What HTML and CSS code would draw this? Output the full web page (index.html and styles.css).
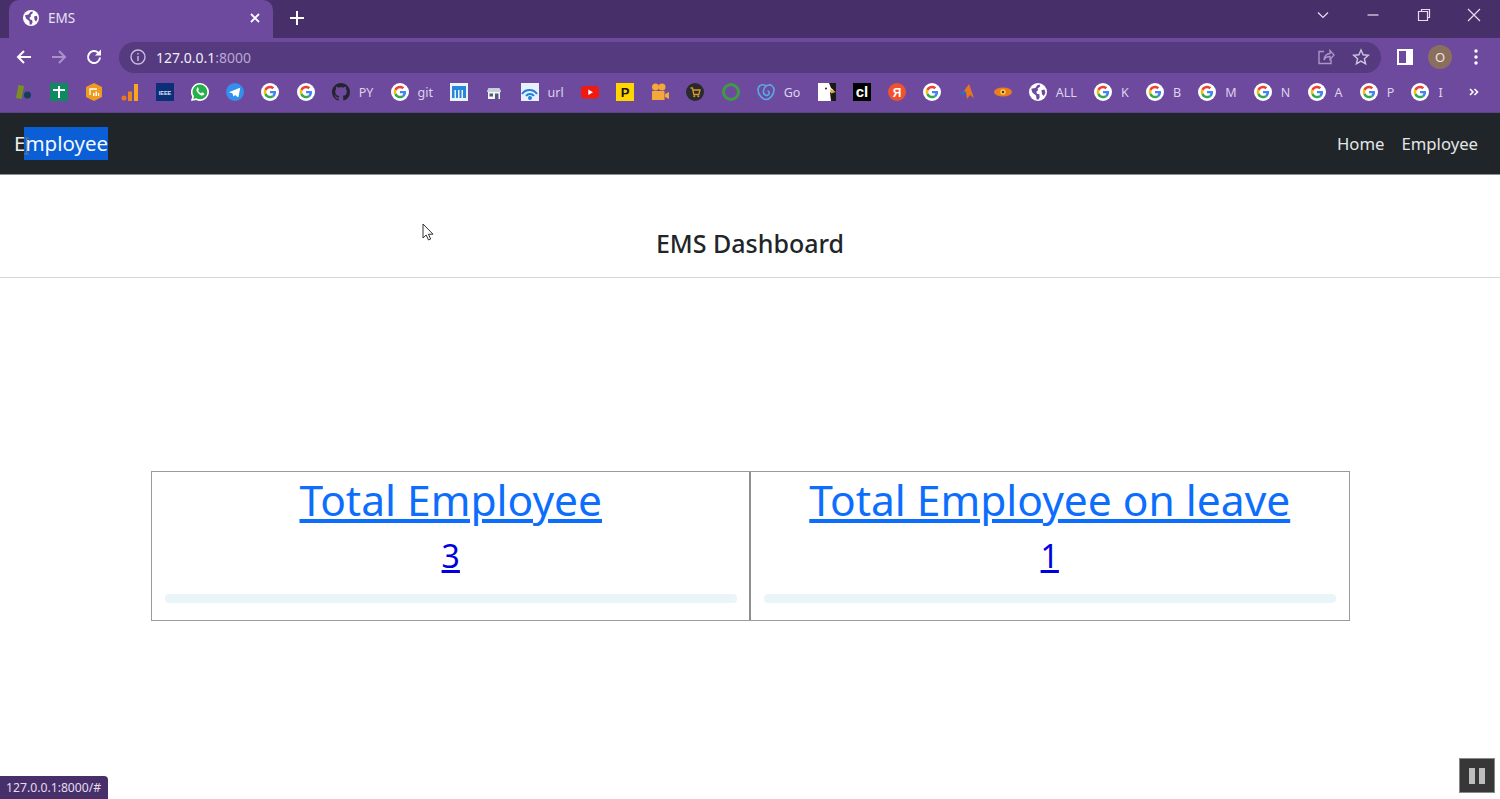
FILE: index.html
```html
<!DOCTYPE html>
<html lang="en">
<head>
<meta charset="utf-8">
<title>EMS</title>
<link rel="stylesheet" href="styles.css">
</head>
<body>
<svg class="defs" width="0" height="0" aria-hidden="true">
  <symbol id="g" viewBox="0 0 18 18">
    <circle cx="9" cy="9" r="9" fill="#fff"/>
    <g transform="translate(2.7 2.7) scale(.2625)">
      <path fill="#EA4335" d="M24 9.5c3.54 0 6.71 1.22 9.21 3.6l6.85-6.85C35.9 2.38 30.47 0 24 0 14.62 0 6.51 5.38 2.56 13.22l7.98 6.19C12.43 13.72 17.74 9.5 24 9.5z"/>
      <path fill="#4285F4" d="M46.98 24.55c0-1.57-.15-3.09-.38-4.55H24v9.02h12.94c-.58 2.96-2.26 5.48-4.78 7.18l7.73 6c4.51-4.18 7.09-10.36 7.09-17.65z"/>
      <path fill="#FBBC05" d="M10.53 28.59c-.48-1.45-.76-2.99-.76-4.59s.27-3.14.76-4.59l-7.98-6.19C.92 16.46 0 20.12 0 24c0 3.88.92 7.54 2.56 10.78l7.97-6.19z"/>
      <path fill="#34A853" d="M24 48c6.48 0 11.93-2.13 15.89-5.81l-7.73-6c-2.15 1.45-4.92 2.3-8.16 2.3-6.26 0-11.57-4.22-13.47-9.91l-7.98 6.19C6.51 42.62 14.62 48 24 48z"/>
    </g>
  </symbol>
  <symbol id="globe" viewBox="0 0 16 16">
    <circle cx="8" cy="8" r="8" fill="#fff"/>
    <path fill="#6e4a9f" d="M2 5.2 5.6 4.4 7.4 2l2-.6.5 1.7-2.3 1.8.5 1.4-1.6 1.4.5 1.8 2.2.6.3 2.7-1.3 2-1.5-.4-.4-3.3L3 8.4zM11 6.4l2.8-.6.8 2.8-1.4 3-1.5-1.4z"/>
  </symbol>
</svg>

<header class="browser">
  <div class="tabstrip">
    <div class="tab">
      <svg class="tab-icon" viewBox="0 0 16 16"><use href="#globe"/></svg>
      <span class="tab-title">EMS</span>
      <svg class="tab-close" viewBox="0 0 10 10"><path d="M1 1l8 8M9 1l-8 8"/></svg>
    </div>
    <svg class="new-tab" viewBox="0 0 14 14"><path d="M7 0v14M0 7h14"/></svg>
    <div class="win-controls">
      <svg class="win" viewBox="0 0 14 14"><path d="M2 4.500l5 5 5-5"/></svg>
      <svg class="win" viewBox="0 0 14 14"><path d="M1.500 7h11"/></svg>
      <svg class="win" viewBox="0 0 14 14"><path d="M4.500 3.500V1.500h8v8h-2M1.500 3.500h9v9h-9z"/></svg>
      <svg class="win" viewBox="0 0 14 14"><path d="M1 1l12 12M13 1L1 13"/></svg>
    </div>
  </div>

  <div class="toolbar">
    <svg class="tool" viewBox="0 0 18 18"><path d="M16 9H3M9 3 3 9l6 6"/></svg>
    <svg class="tool muted" viewBox="0 0 18 18"><path d="M2 9h13M9 3l6 6-6 6"/></svg>
    <svg class="tool" viewBox="0 0 18 18"><path d="M15 9.500A6 6 0 1 1 13.200 4.700"/><path class="solid" d="M16 1.500v6h-6z"/></svg>
    <div class="omnibox">
      <svg class="info" viewBox="0 0 16 16"><circle cx="8" cy="8" r="7"/><path d="M8 7v5M8 4v1.600"/></svg>
      <span class="url">127.0.0.1<span class="url-port">:8000</span></span>
      <svg class="omni-icon share" viewBox="0 0 18 18"><path d="M7 3.500H2v12h12v-4M7 12c0-4 3-6.500 6-6.500V2.500l4 4.500-4 4.500V8.500c-3 0-5 1-6 3.500z"/></svg>
      <svg class="omni-icon" viewBox="0 0 18 18"><path d="M9 2l2.100 4.800 5.200.5-3.900 3.400 1.200 5.100L9 13.100l-4.600 2.700 1.200-5.100-3.900-3.400 5.200-.5z"/></svg>
    </div>
    <svg class="panel" viewBox="0 0 16 16"><path fill="#fff" d="M0 0h16v16H0z"/><path fill="#6e4a9f" d="M2 2h7v12H2z"/></svg>
    <span class="avatar">O</span>
    <svg class="kebab" viewBox="0 0 4 16"><circle cx="2" cy="2" r="1.700"/><circle cx="2" cy="8" r="1.700"/><circle cx="2" cy="14" r="1.700"/></svg>
  </div>

  <div class="bookmarks">
    <span class="bm"><svg viewBox="0 0 18 18"><path fill="#7c8f1e" d="M1 15 3.500 2 9 3 6.500 16z"/><circle cx="12.500" cy="12" r="3.500" fill="#123f5c"/></svg></span>
    <span class="bm"><svg viewBox="0 0 18 18"><path fill="#0f8a60" d="M0 0h18v18H0z"/><path fill="#fff" d="M8 3h2v3h5v2h-5v7H8V8H3V6h5z"/></svg></span>
    <span class="bm"><svg viewBox="0 0 18 18"><path fill="#f09a1e" d="M9 0l8 4v10l-8 4-8-4V4z"/><path fill="none" stroke="#fff" stroke-width="1.300" d="M5 12V6h7"/><path fill="#fff" d="M8 10h1.500v3H8zm2.500-1.500H12V13h-1.500zM13 10h1.200v3H13z"/></svg></span>
    <span class="bm"><svg viewBox="0 0 18 18"><circle cx="3" cy="15" r="2.500" fill="#e8761e"/><path fill="#e8861e" d="M7 8.500h4V18H7z"/><path fill="#f5a623" d="M13 1h4v17h-4z"/></svg></span>
    <span class="bm"><svg viewBox="0 0 18 18"><path fill="#0c2f78" d="M0 0h18v18H0z"/><text x="9" y="11.500" class="ieee">IEEE</text></svg></span>
    <span class="bm"><svg viewBox="0 0 18 18"><path fill="#fff" d="M9 0a9 9 0 0 1 0 18 9 9 0 0 1-4-1l-5 1 1.200-4.500A9 9 0 0 1 9 0z"/><path fill="#25b04a" d="M9 1.600a7.300 7.300 0 0 1 0 14.700 7.300 7.300 0 0 1-3.800-1.100l-3 .8.800-2.800A7.300 7.300 0 0 1 9 1.600z"/><path fill="#fff" d="M6.500 4.800c-.8.500-1.300 1.600-1 2.800.5 2 2.500 4 4.600 4.800 1.300.4 2.400 0 3-.9.300-.5.300-1 .1-1.200l-1.900-.9c-.3-.1-.5 0-.7.300l-.5.700c-1.300-.5-2.400-1.500-3-2.800l.6-.6c.2-.3.200-.5.100-.8l-.7-1.800c-.2-.4-.4-.5-.6-.4z"/></svg></span>
    <span class="bm"><svg viewBox="0 0 18 18"><circle cx="9" cy="9" r="9" fill="#3390ec"/><path fill="#fff" d="M3.500 9 13.300 5c.5-.2.900.1.800.700l-1.600 7.800c-.1.600-.5.700-1 .4l-2.400-1.800-1.200 1.100c-.3.300-.5.200-.6-.2L6.400 10.200l-2.900-.8c-.400-.1-.400-.3 0-.4z"/></svg></span>
    <span class="bm"><svg><use href="#g"/></svg></span>
    <span class="bm"><svg><use href="#g"/></svg></span>
    <span class="bm"><svg viewBox="0 0 16 16"><path fill="#23252e" d="M8 0C3.580 0 0 3.580 0 8c0 3.540 2.290 6.530 5.470 7.590.4.070.55-.17.55-.38 0-.19-.01-.82-.01-1.490-2.010.37-2.530-.49-2.690-.94-.09-.23-.48-.94-.82-1.130-.28-.15-.68-.52-.01-.53.63-.01 1.080.58 1.230.82.72 1.210 1.870.87 2.330.66.070-.52.28-.87.51-1.070-1.780-.2-3.640-.89-3.640-3.950 0-.87.31-1.590.82-2.150-.08-.2-.36-1.020.08-2.120 0 0 .67-.21 2.200.82.64-.18 1.320-.27 2-.27.68 0 1.360.09 2 .27 1.530-1.040 2.200-.82 2.200-.82.44 1.100.16 1.920.08 2.120.51.56.82 1.270.82 2.150 0 3.070-1.870 3.750-3.650 3.950.29.25.54.73.54 1.480 0 1.070-.01 1.930-.01 2.200 0 .21.15.46.55.38A8.013 8.013 0 0 0 16 8c0-4.420-3.580-8-8-8z"/></svg><span class="bm-label">PY</span></span>
    <span class="bm"><svg><use href="#g"/></svg><span class="bm-label">git</span></span>
    <span class="bm"><svg viewBox="0 0 18 18"><path fill="#eaf4fb" d="M0 0h18v18H0z"/><path fill="#2a86d8" d="M2 3h14v12h-3V7h-1.500v8h-2V7H8v8H6V7H4.500v8H2z"/></svg></span>
    <span class="bm"><svg viewBox="0 0 18 18"><path fill="#c6cfdb" d="M2 8 3.500 5h11L16 8v1H2z"/><path fill="#f2f4f7" d="M3 9h12v7H3z"/><path fill="#4a5c78" d="M10 10.500h3.500V16H10zM4.500 10.500H8v3H4.500z"/></svg></span>
    <span class="bm"><svg viewBox="0 0 18 18"><path fill="#e8f1fb" d="M0 0h18v18H0z"/><path fill="none" stroke="#1f7fe0" stroke-width="2" d="M1 11a9 9 0 0 1 15 0M5 13a5 5 0 0 1 8 0"/><circle cx="9" cy="15" r="2" fill="#1f7fe0"/></svg><span class="bm-label">url</span></span>
    <span class="bm"><svg viewBox="0 0 18 18"><rect y="3" width="18" height="12.500" rx="3.500" fill="#f01a10"/><path fill="#fff" d="M7.300 6.500 12 9.200l-4.700 2.700z"/></svg></span>
    <span class="bm"><svg viewBox="0 0 18 18"><path fill="#ffd500" d="M0 0h18v18H0z"/><text x="9" y="13.500" class="yellow-p">P</text></svg></span>
    <span class="bm"><svg viewBox="0 0 18 18"><circle cx="4.500" cy="4" r="3.500" fill="#f5a83a"/><circle cx="11" cy="4" r="3.500" fill="#f5a83a"/><path fill="#f5a83a" d="M1 8h12.500v9H1zM14 11l4-2v7l-4-2z"/></svg></span>
    <span class="bm"><svg viewBox="0 0 18 18"><circle cx="9" cy="9" r="9" fill="#2a2a2c"/><path fill="none" stroke="#d99a2b" stroke-width="1.300" d="M4.500 5h2l1.300 6.500h5L14 7H7"/><circle cx="8.300" cy="13.300" r="1" fill="#d99a2b"/><circle cx="12.300" cy="13.300" r="1" fill="#d99a2b"/></svg></span>
    <span class="bm"><svg viewBox="0 0 18 18"><circle cx="9" cy="9" r="7.500" fill="none" stroke="#3f9a46" stroke-width="3"/></svg></span>
    <span class="bm"><svg viewBox="0 0 18 18"><path fill="none" stroke="#5aa9e6" stroke-width="1.600" d="M9.500 3.500C7 .5 1 1.500 1 7c0 5 5 9.500 8 9.500 3.500 0 8-4.500 8-9.500 0-3.500-3-5.500-5.500-5-3.500.7-5.500 4.500-5 7.500.4 2.500 3 3.500 4.500 2.500 2-1.300 1.500-4-.5-4"/></svg><span class="bm-label">Go</span></span>
    <span class="bm"><svg viewBox="0 0 18 18"><path fill="#1a1a1a" d="M0 0h18v18H0z"/><path fill="#fff" d="M0 0h11l2 5 3 2.500-4 2 1 8.500H0z"/><path fill="#e8a33a" d="m12 6 6 3-5 1.500z"/><circle cx="8" cy="5.500" r="1" fill="#222"/></svg></span>
    <span class="bm"><svg viewBox="0 0 18 18"><path fill="#000" d="M0 0h18v18H0z"/><text x="9" y="14" class="cl">cl</text></svg></span>
    <span class="bm"><svg viewBox="0 0 18 18"><circle cx="9" cy="9" r="9" fill="#f0522e"/><text x="9" y="13.500" class="ya">Я</text></svg></span>
    <span class="bm"><svg><use href="#g"/></svg></span>
    <span class="bm"><svg viewBox="0 0 18 18"><path fill="#2a6fc0" d="M1 10l5-2 2 2-3 2z"/><path fill="#e8761e" d="M6 8l5-7 5 14-4-3-3 4-1-7z"/></svg></span>
    <span class="bm"><svg viewBox="0 0 18 18"><ellipse cx="9" cy="9" rx="9" ry="4.500" fill="#e87c1e"/><circle cx="9" cy="9" r="2.700" fill="#f8d24a"/><circle cx="9" cy="9" r="1.200" fill="#5a2a10"/></svg></span>
    <span class="bm"><svg viewBox="0 0 16 16"><use href="#globe"/></svg><span class="bm-label">ALL</span></span>
    <span class="bm"><svg><use href="#g"/></svg><span class="bm-label">K</span></span>
    <span class="bm"><svg><use href="#g"/></svg><span class="bm-label">B</span></span>
    <span class="bm"><svg><use href="#g"/></svg><span class="bm-label">M</span></span>
    <span class="bm"><svg><use href="#g"/></svg><span class="bm-label">N</span></span>
    <span class="bm"><svg><use href="#g"/></svg><span class="bm-label">A</span></span>
    <span class="bm"><svg><use href="#g"/></svg><span class="bm-label">P</span></span>
    <span class="bm"><svg><use href="#g"/></svg><span class="bm-label">I</span></span>
    <svg class="more" viewBox="0 0 10 8"><path d="M1 1l3 3-3 3M5.500 1l3 3-3 3"/></svg>
  </div>
</header>

<nav class="navbar">
  <a class="brand" href="#">E<span class="selected">mployee</span></a>
  <div class="nav-links">
    <a class="nav-link" href="#">Home</a>
    <a class="nav-link" href="#">Employee</a>
  </div>
</nav>

<main class="dashboard">
  <h4 class="page-title">EMS Dashboard</h4>
  <hr class="rule">
  <section class="cards">
    <article class="card">
      <h1 class="card-title"><a href="#">Total Employee</a></h1>
      <h2 class="card-count"><a href="#">3</a></h2>
      <div class="track"></div>
    </article>
    <article class="card">
      <h1 class="card-title"><a href="#">Total Employee on leave</a></h1>
      <h2 class="card-count"><a href="#">1</a></h2>
      <div class="track"></div>
    </article>
  </section>
</main>

<svg class="pointer" viewBox="0 0 12 18"><path d="M1 1v14l3.200-3 2.300 5 2.200-1-2.300-4.800H11z"/></svg>
<svg class="ibeam" viewBox="0 0 7 18"><path d="M1 1h5M3.500 1v16M1 17h5"/></svg>
<div class="status">127.0.0.1:8000/#</div>
<div class="pause"><span></span><span></span></div>
</body>
</html>
```
FILE: styles.css
```css
* { box-sizing: border-box; }
html, body { margin: 0; height: 799px; overflow: hidden; }
body {
  position: relative;
  background: #fff;
  font-family: "Noto Sans", "Open Sans", "Liberation Sans", sans-serif;
  color: #212529;
}
.defs { position: absolute; }

/* browser chrome */
.browser { background: #6e4a9f; }
.tabstrip {
  height: 38px;
  background: #47306a;
  display: flex;
  align-items: flex-start;
  padding-left: 9px;
}
.tab {
  width: 264px;
  height: 38px;
  background: #6e4a9f;
  border-radius: 10px 10px 0 0;
  display: flex;
  align-items: center;
  padding: 0 13px 3px 14px;
  color: #e9e2f2;
  font-size: 13.500px;
}
.tab-icon { width: 16px; height: 16px; flex: none; }
.tab-title { margin-left: 9px; flex: 1; }
.tab-close { width: 10px; height: 10px; fill: none; stroke: #fff; stroke-width: 1.800; }
.new-tab {
  width: 14px; height: 14px; margin: 11px 0 0 17px;
  fill: none; stroke: #fff; stroke-width: 2;
}
.win-controls { margin-left: auto; display: flex; gap: 36.500px; padding: 8px 19px 0 0; }
.win { width: 14px; height: 14px; fill: none; stroke: #e6deef; stroke-width: 1.200; }

.toolbar {
  height: 35px;
  display: flex;
  align-items: center;
  padding: 3px 0 0 15px;
}
.tool {
  width: 18px; height: 18px; flex: none; margin-right: 17px;
  fill: none; stroke: #fff; stroke-width: 2;
}
.tool.muted { stroke: #a993c8; }
.tool .solid { fill: #fff; stroke: none; }
.omnibox {
  flex: none;
  width: 1262px;
  height: 31px;
  margin-left: -1px;
  background: #553a7f;
  border-radius: 16px;
  display: flex;
  align-items: center;
  padding: 0 11px;
}
.info { width: 16px; height: 16px; fill: none; stroke: #c9bcdd; stroke-width: 1.400; }
.url { margin-left: 10px; font-size: 14px; color: #f1ecf7; flex: 1; }
.url-port { color: #b9a9d2; }
.omni-icon { width: 18px; height: 18px; margin-left: 17px; fill: none; stroke: #cfc4e0; stroke-width: 1.400; }
.omni-icon.share { stroke: #a996c6; }
.panel { width: 16px; height: 16px; margin-left: 16px; flex: none; }
.avatar {
  width: 24px; height: 24px; margin-left: 15px; flex: none;
  border-radius: 50%;
  background: #8a6f5e;
  color: #eee4da;
  font-size: 13px;
  display: flex; align-items: center; justify-content: center;
}
.kebab { width: 4px; height: 16px; margin-left: 22px; fill: #fff; flex: none; }

.bookmarks {
  height: 40px;
  display: flex;
  align-items: center;
  gap: 17.200px;
  padding: 0 0 1px 15px;
  border-bottom: 1px solid #5f4288;
  color: #ddd3ea;
  font-size: 12.500px;
}
.bm { display: flex; align-items: center; flex: none; }
.bm svg { width: 18px; height: 18px; display: block; }
.bm-label { margin-left: 9px; }
.more { width: 10px; height: 8px; margin-left: auto; margin-right: 21px; fill: none; stroke: #fff; stroke-width: 1.600; }
.ieee { font: 700 5.500px "Liberation Sans", sans-serif; fill: #dfe8ff; text-anchor: middle; }
.yellow-p { font: 700 13px "Liberation Sans", sans-serif; fill: #111; text-anchor: middle; }
.cl { font: 700 15px "Liberation Sans", sans-serif; fill: #fff; text-anchor: middle; }
.ya { font: 700 12px "Liberation Sans", sans-serif; fill: #fff; text-anchor: middle; }

/* navbar */
.navbar {
  height: 62px;
  background: #1f2529;
  border-bottom: 1px solid #8d8f91;
  display: flex;
  align-items: center;
  justify-content: space-between;
  padding: 0 22px 0 14px;
}
.navbar a { text-decoration: none; }
.brand { color: #eceeef; font-size: 20.500px; line-height: 33px; }
.selected { background: #0a5fd6; color: #f4f8fe; display: inline-block; margin-left: -1px; padding-left: 1px; }
.nav-links { display: flex; gap: 17px; }
.nav-link { color: #e4e5e5; font-size: 16.700px; }

/* dashboard */
.dashboard { display: flex; flex-direction: column; }
.page-title {
  margin: 0;
  padding-top: 52px;
  text-align: center;
  font-size: 25px;
  line-height: 33px;
  font-weight: 500;
  height: 102px;
}
.rule { margin: 0; border: 0; border-top: 1px solid #d8d8d8; }
.cards {
  margin: 193px auto 0;
  width: 1199px;
  height: 150px;
  display: grid;
  grid-template-columns: 1fr 1fr;
  border: 1px solid #9b9b9b;
}
.card {
  display: flex;
  flex-direction: column;
  align-items: center;
  padding: 0 13px;
}
.card + .card { border-left: 2px solid #8e8e8e; margin-left: -1px; }
.card-title { margin: 2px 0 0; font-size: 42.500px; line-height: 52px; font-weight: 400; }
.card-title a { color: #0d6efd; }
.card-count { margin: 8px 0 0; font-size: 32px; line-height: 44px; font-weight: 400; }
.card-count a { color: #0000dd; }
.track {
  align-self: stretch;
  height: 9px;
  margin-top: 16px;
  background: #eaf5f9;
  border-radius: 4px;
}

/* overlays */
.pointer {
  position: absolute; left: 422px; top: 223px; width: 12px; height: 18px;
  fill: #fff; stroke: #333; stroke-width: 1;
}
.ibeam {
  position: absolute; left: 23px; top: 137px; width: 7px; height: 18px;
  fill: none; stroke: #777; stroke-width: 1;
}
.status {
  position: absolute; left: 0; bottom: 0;
  width: 108px; height: 23px;
  background: #47306a;
  border-top-right-radius: 4px;
  color: #e3dcee;
  font-size: 12.200px;
  line-height: 23px;
  padding-left: 6px;
  white-space: nowrap;
}
.pause {
  position: absolute; left: 1459px; top: 758px;
  width: 36px; height: 35px;
  background: #373737;
  border: 1px solid #888;
  display: flex; align-items: center; justify-content: center; gap: 4px;
}
.pause span { width: 6px; height: 16px; background: #bdbdbd; }
```
